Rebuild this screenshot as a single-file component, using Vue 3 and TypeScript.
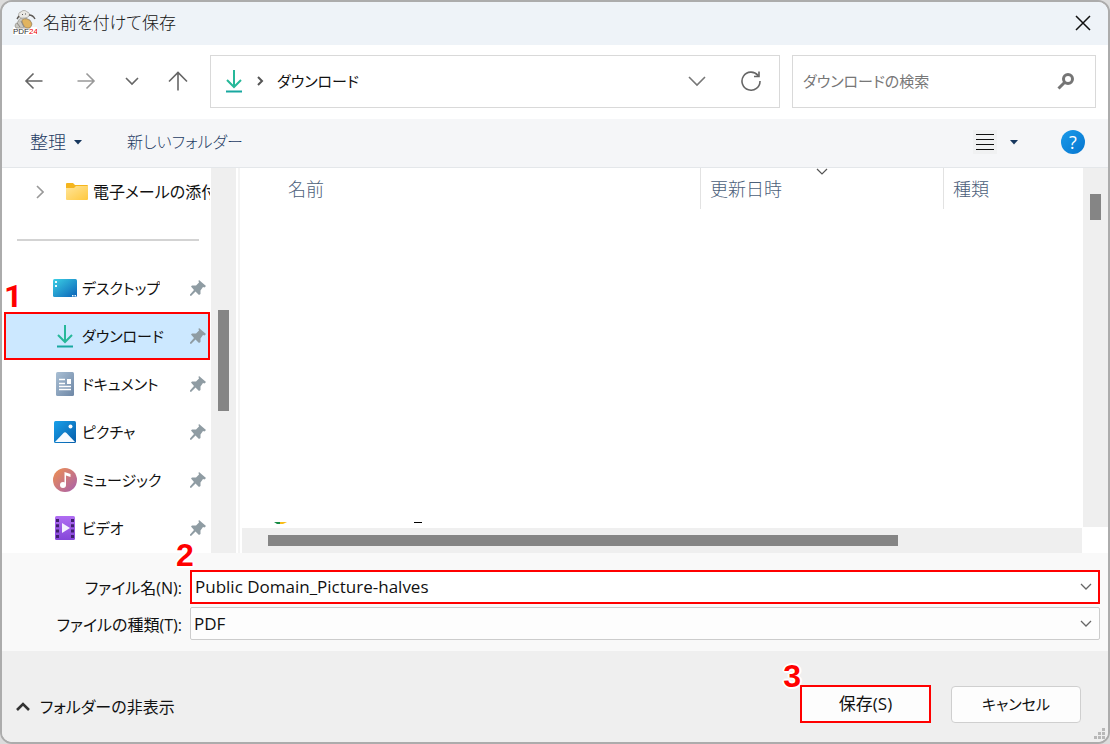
<script setup lang="ts">
import { ref } from 'vue'

interface Place {
  name: string
  icon: 'desktop' | 'download' | 'document' | 'picture' | 'music' | 'video'
}

const places: Place[] = [
  { name: 'デスクトップ', icon: 'desktop' },
  { name: 'ダウンロード', icon: 'download' },
  { name: 'ドキュメント', icon: 'document' },
  { name: 'ピクチャ', icon: 'picture' },
  { name: 'ミュージック', icon: 'music' },
  { name: 'ビデオ', icon: 'video' },
]

const current = ref('ダウンロード')
const fileName = ref('Public Domain_Picture-halves')
const fileType = ref('PDF')
const query = ref('')
</script>

<template>
  <main class="dialog">
    <header class="titlebar">
      <svg class="logo" width="24" height="25" viewBox="0 0 24 25">
        <rect x="0" y="17" width="24" height="8" fill="#fff" />
        <path d="M3 18C1 15 3 13 5 12C6 8 9 7 12 8L17 10L19 14L17 18Z" fill="#c9c8c2" stroke="#8c8982" stroke-width=".7" />
        <path d="M6 7C5 4 6 2 8 2C9 0 13 0 14 2C16 2 17 4 16 6C15 8 8 9 6 7Z" fill="#e9e8e4" stroke="#9b9994" stroke-width=".7" />
        <path d="M6 6L4 9M16 5Q20 5 22 9" fill="none" stroke="#5f5b57" stroke-width="1.4" />
        <path d="M9 10Q14 7 18 12Q20 17 15 18Q10 18 9 10Z" fill="#e1b45f" stroke="#a98a55" stroke-width=".7" />
        <path d="M8 11L11 17M4 13L7 17" stroke="#8b8782" stroke-width="1" />
        <path d="M9 4L10 5M12 4L13 4" stroke="#555" stroke-width="1" />
        <text x="0" y="24" class="logo-text" fill="#333">PDF<tspan fill="#e00">24</tspan></text>
      </svg>
      <h1>名前を付けて保存</h1>
      <button class="plain close" type="button" aria-label="閉じる">
        <svg width="16" height="16" viewBox="0 0 16 16"><path d="M1 1L15 15M15 1L1 15" stroke="#111" stroke-width="1.5" /></svg>
      </button>
    </header>

    <nav class="navbar">
      <div class="history">
        <button class="plain" type="button" aria-label="戻る">
          <svg width="20" height="20" viewBox="0 0 20 20" class="line dark"><path d="M18.500 10H2M9.500 2.500L2 10L9.500 17.500" /></svg>
        </button>
        <button class="plain" type="button" aria-label="進む">
          <svg width="20" height="20" viewBox="0 0 20 20" class="line pale"><path d="M1.500 10H18M10.500 2.500L18 10L10.500 17.500" /></svg>
        </button>
        <button class="plain" type="button" aria-label="履歴">
          <svg width="14" height="14" viewBox="0 0 14 14" class="line dark"><path d="M1 4L7 10L13 4" /></svg>
        </button>
        <button class="plain" type="button" aria-label="上へ">
          <svg width="20" height="20" viewBox="0 0 20 20" class="line dark"><path d="M10 19.500V1.500M1 10.500L10 1.500L19 10.500" /></svg>
        </button>
      </div>
      <div class="address">
        <svg width="18" height="24" viewBox="0 0 18 24" class="down"><path d="M9 1V18M2 11L9 18L16 11" /><path d="M1 22.500H17" class="tray" /></svg>
        <svg width="8" height="10" viewBox="0 0 8 10" class="line strong"><path d="M2 1L6 5L2 9" /></svg>
        <span class="crumb">ダウンロード</span>
        <button class="plain" type="button" aria-label="以前の場所">
          <svg width="18" height="12" viewBox="0 0 18 12" class="line mid"><path d="M1 2L9 10L17 2" /></svg>
        </button>
        <button class="plain" type="button" aria-label="更新">
          <svg width="20" height="20" viewBox="0 0 20 20" class="line dark"><path d="M17 4.500A9 9 0 1 0 19 10M18 0.500V5.500H13" /></svg>
        </button>
      </div>
      <label class="search">
        <input v-model="query" type="text" placeholder="ダウンロードの検索" aria-label="ダウンロードの検索">
        <svg width="18" height="18" viewBox="0 0 18 18"><circle cx="11" cy="7" r="4.500" fill="none" stroke="#757575" stroke-width="3" /><path d="M7.500 10.500L1.500 16.500" stroke="#757575" stroke-width="3" /></svg>
      </label>
    </nav>

    <section class="toolbar">
      <button class="plain tool" type="button">整理<svg width="8" height="5" viewBox="0 0 8 5"><path d="M0 0H8L4 4.500Z" fill="#17375e" /></svg></button>
      <button class="plain tool" type="button">新しいフォルダー</button>
      <span class="grow" />
      <button class="plain view" type="button" aria-label="表示方法">
        <svg class="lines" width="24" height="24" viewBox="0 0 24 24"><path d="M3 4.500H21M3 9.500H21M3 14.500H21M3 19.500H21" stroke="#111" stroke-width="1" /></svg>
        <svg width="8" height="5" viewBox="0 0 8 5"><path d="M0 0H8L4 4.500Z" fill="#17375e" /></svg>
      </button>
      <button class="help" type="button" aria-label="ヘルプ">?</button>
    </section>

    <section class="browser">
      <aside class="sidebar">
        <button class="plain place folder" type="button">
          <svg width="8" height="14" viewBox="0 0 8 14" class="line pale"><path d="M1 1L7 7L1 13" /></svg>
          <svg width="24" height="20" viewBox="0 0 24 20">
            <defs><linearGradient id="folder" x1="0" y1="0" x2="1" y2="1"><stop stop-color="#ffe59a" /><stop offset="1" stop-color="#ffc83d" /></linearGradient></defs>
            <path d="M1 4V2Q1 1 2 1H8L10 3H22Q23 3 23 4V7H1Z" fill="#f5b51d" />
            <path d="M1 6H9L11 4H23V17Q23 18 22 18H2Q1 18 1 17Z" fill="url(#folder)" />
          </svg>
          <span>電子メールの添付</span>
        </button>
        <hr>
        <button
          v-for="place in places"
          :key="place.name"
          type="button"
          :class="['plain', 'place', { selected: place.name === current }]"
          @click="current = place.name"
        >
          <svg v-if="place.icon === 'desktop'" width="24" height="24" viewBox="0 0 24 24">
            <defs><linearGradient id="desk" x1="0" y1="0" x2="1" y2="1"><stop stop-color="#3bd0e5" /><stop offset="1" stop-color="#0b62b8" /></linearGradient></defs>
            <rect y="3" width="24" height="18" rx="1.500" fill="url(#desk)" />
            <path d="M2 5H4V7H2ZM2 9H4V11H2ZM19 19H20.500V20.500H19ZM21.500 19H23V20.500H21.500Z" fill="#e9fbff" />
          </svg>
          <svg v-else-if="place.icon === 'download'" width="24" height="24" viewBox="0 0 24 24" class="down"><path d="M12 1V18M5 11L12 18L19 11" /><path d="M4 22.500H20" class="tray" /></svg>
          <svg v-else-if="place.icon === 'document'" width="24" height="24" viewBox="0 0 24 24">
            <defs><linearGradient id="doc" x1="0" y1="0" x2="1" y2="1"><stop stop-color="#a9bfd4" /><stop offset="1" stop-color="#6e87a6" /></linearGradient></defs>
            <rect x="3" width="18" height="24" rx="1.500" fill="url(#doc)" />
            <path d="M6 7.500H12M6 11.500H12M6 14.500H18M6 17.500H18" stroke="#fff" stroke-width="1.300" />
            <rect x="14" y="7" width="4" height="5" fill="#fff" />
          </svg>
          <svg v-else-if="place.icon === 'picture'" width="24" height="24" viewBox="0 0 24 24">
            <defs><linearGradient id="pic" x1="0" y1="0" x2="1" y2="1"><stop stop-color="#18a0ea" /><stop offset="1" stop-color="#075da9" /></linearGradient></defs>
            <rect x="1" y="1" width="22" height="22" rx="1.500" fill="url(#pic)" />
            <path d="M2 22L10.500 13Q12 11.500 13.500 13L22 22Z" fill="#f7fbff" /><circle cx="17.500" cy="6.500" r="2" fill="#fff" />
          </svg>
          <svg v-else-if="place.icon === 'music'" width="24" height="24" viewBox="0 0 24 24">
            <defs><linearGradient id="music" x1="0" y1="0" x2="1" y2="1"><stop stop-color="#f0914f" /><stop offset="1" stop-color="#a75fae" /></linearGradient></defs>
            <circle cx="12" cy="12" r="12" fill="url(#music)" />
            <circle cx="10" cy="17" r="3" fill="#fff" /><path d="M11.500 17V4L17.500 6V9L13 7.500V17Z" fill="#fff" />
          </svg>
          <svg v-else width="24" height="24" viewBox="0 0 24 24">
            <defs><linearGradient id="video" x1="0" y1="0" x2="0" y2="1"><stop stop-color="#b06df2" /><stop offset="1" stop-color="#8546d9" /></linearGradient></defs>
            <rect x="2" width="20" height="24" rx="1.500" fill="url(#video)" />
            <path d="M4.500 3V22M19.500 3V22" stroke="#40206f" stroke-width="3" stroke-dasharray="3 2.300" />
            <path d="M9 7L17 12L9 17Z" fill="#f4efff" />
          </svg>
          <span>{{ place.name }}</span>
          <svg class="pin" width="16" height="16" viewBox="0 0 16 16"><path d="M9 0L16 6L14.500 7.500L13 7L10.500 10.500V14L9 15L5.500 11.500L1 16L0 15.500V14.500L4 10L1 6.500L2 5.500H6L9 2.500L8.500 1Z" fill="#8f9ca3" /></svg>
        </button>
      </aside>
      <div class="track vertical"><div class="thumb places-thumb" /></div>
      <div class="splitter" />
      <div class="files">
        <table>
          <thead>
            <tr>
              <th class="col-name" scope="col">名前</th>
              <th class="col-date" scope="col">更新日時
                <svg class="sort" width="12" height="8" viewBox="0 0 12 8"><path d="M1 1L6 6L11 1" fill="none" stroke="#555" stroke-width="1.200" /></svg>
              </th>
              <th scope="col">種類</th>
            </tr>
          </thead>
        </table>
        <svg class="row-edge" width="150" height="2" viewBox="0 0 150 2"><path d="M1 0H7V2H4Z" fill="#168b43" /><path d="M7 0H14L10 2H7Z" fill="#f8bd18" /><path d="M141 0H149V1H141Z" fill="#000" /></svg>
        <div class="track horizontal"><div class="thumb wide-thumb" /></div>
      </div>
      <div class="track vertical list-track"><div class="thumb files-thumb" /></div>
    </section>

    <section class="fields">
      <label for="file-name">ファイル名(N):</label>
      <div class="combo marked">
        <input id="file-name" v-model="fileName" type="text">
        <svg width="12" height="8" viewBox="0 0 12 8" class="line chevron"><path d="M1 1L6 6L11 1" /></svg>
      </div>
      <label for="file-type">ファイルの種類(T):</label>
      <div class="combo boxed">
        <select id="file-type" v-model="fileType"><option>PDF</option></select>
        <svg width="12" height="8" viewBox="0 0 12 8" class="line chevron"><path d="M1 1L6 6L11 1" /></svg>
      </div>
    </section>

    <footer class="footer">
      <button class="plain toggle" type="button">
        <svg width="14" height="10" viewBox="0 0 14 10"><path d="M1 8L7 2L13 8" fill="none" stroke="#333" stroke-width="2.600" /></svg>
        フォルダーの非表示
      </button>
      <button class="action save" type="button">保存(S)</button>
      <button class="action" type="button">キャンセル</button>
      <svg class="grip" width="12" height="12" viewBox="0 0 12 12"><path d="M8 0H11V3H8ZM4 4H7V7H4ZM8 4H11V7H8ZM0 8H3V11H0ZM4 8H7V11H4ZM8 8H11V11H8Z" fill="#b8b8b8" /></svg>
    </footer>

    <span class="step one">1</span>
    <span class="step two">2</span>
    <span class="step three">3</span>
  </main>
</template>

<style>
html, body {
  margin: 0;
  background: #dcdcdc;
}
</style>

<style scoped>
* {
  box-sizing: border-box;
}
.dialog {
  position: relative;
  display: flex;
  flex-direction: column;
  min-height: 100vh;
  overflow: hidden;
  border: 2px solid #acacac;
  border-radius: 12px;
  background: #fff;
  color: #111;
  font: 400 16px/24px "Open Sans", "Noto Sans CJK JP", sans-serif;
  font-feature-settings: "palt";
}
svg {
  display: block;
  flex: none;
}
button, input, select {
  font: inherit;
  font-feature-settings: inherit;
  color: inherit;
}
.plain {
  display: flex;
  align-items: center;
  justify-content: center;
  padding: 0;
  border: 0;
  background: none;
  white-space: nowrap;
}
.line {
  fill: none;
  stroke-width: 1.6;
}
.dark { stroke: #666; }
.pale { stroke: #999; }
.mid { stroke: #777; }
.strong { stroke: #555; stroke-width: 2; }
.down {
  fill: none;
  stroke: #26b899;
  stroke-width: 2;
}
.tray { stroke: #18a8a0; }

.titlebar {
  display: flex;
  align-items: center;
  height: 43px;
  padding: 0 17px 2px 11px;
  background: #eef3f8;
}
.logo-text {
  font: 400 8px "Liberation Sans", sans-serif;
}
h1 {
  margin: 0 auto 0 6px;
  font-size: 17px;
  font-weight: 300;
}

.navbar {
  display: flex;
  align-items: center;
  gap: 12px;
  height: 74px;
  padding: 0 12px 2px 16px;
}
.history {
  display: flex;
  gap: 16px;
  width: 180px;
}
.history button {
  width: 32px;
  height: 32px;
}
.history button:nth-child(2) {
  margin-left: 4px;
}
.history button:nth-child(n + 3) {
  margin-left: -2px;
}
.address, .search {
  display: flex;
  align-items: center;
  height: 53px;
  border: 1px solid #d9d9d9;
  background: #fff;
}
.address {
  flex: 1;
  gap: 13px;
  padding: 0 18px 0 14px;
}
.crumb {
  flex: 1;
  font-size: 15px;
}
.address button + button {
  margin-left: 22px;
}
.search {
  width: 304px;
  padding: 0 20px 0 10px;
}
.search input {
  flex: 1;
  min-width: 0;
  padding: 0;
  border: 0;
  outline: 0;
  background: none;
  font-size: 15px;
}
.search input::placeholder {
  color: #777;
  opacity: 1;
}

.toolbar {
  display: flex;
  align-items: center;
  height: 49px;
  padding: 0 23px 2px 28px;
  border-bottom: 1px solid #e4e7ea;
  background: #f5f6f8;
  color: #1f3c64;
}
.tool {
  gap: 8px;
  margin-right: 45px;
  font-size: 18px;
  font-weight: 300;
}
.tool + .tool {
  font-size: 16px;
}
.grow {
  flex: 1;
}
.view {
  gap: 13px;
  margin-right: 43px;
}
.lines {
  background: #f0f1f2;
}
.help {
  width: 24px;
  height: 24px;
  padding: 0;
  border: 0;
  border-radius: 50%;
  background: linear-gradient(135deg, #1b9bea, #0675cf);
  color: #fff;
  font-size: 18px;
}

.browser {
  display: flex;
  flex: 1;
  min-height: 385px;
}
.sidebar {
  width: 209px;
  overflow: hidden;
}
.place {
  justify-content: flex-start;
  gap: 5px;
  width: 208px;
  height: 48px;
  padding: 0 4px 0 51px;
  font-size: 15px;
}
.place span {
  overflow: hidden;
}
.folder {
  gap: 21px;
  padding: 0 0 0 34px;
  font-size: 16px;
}
.folder span {
  margin-left: -17px;
}
.sidebar hr {
  height: 2px;
  margin: 23px 12px 23px 15px;
  border: 0;
  background: #d3d3d3;
}
.pin {
  margin-left: auto;
}
.selected {
  background: #cce8ff;
  outline: 2px solid #f00;
  outline-offset: -2px;
  margin-left: 2px;
  width: 206px;
  padding-left: 49px;
}
.track {
  background: #efefef;
}
.vertical {
  flex: none;
  width: 25px;
  padding: 0 7px;
}
.thumb {
  background: #858585;
}
.places-thumb {
  height: 101px;
  margin-top: 142px;
}
.files-thumb {
  height: 26px;
  margin-top: 26px;
}
.list-track {
  margin-bottom: 26px;
}
.splitter {
  flex: none;
  width: 4px;
  border-right: 2px solid #f4f4f4;
}
.files {
  display: flex;
  flex: 1;
  flex-direction: column;
  min-width: 0;
}
table {
  width: 100%;
  table-layout: fixed;
  border-collapse: separate;
  border-spacing: 0;
}
th {
  position: relative;
  height: 41px;
  padding: 0 0 0 9px;
  color: #4c607a;
  font-size: 18px;
  font-weight: 300;
  text-align: left;
}
th + th {
  border-left: 1px solid #e2e2e2;
}
.col-name {
  width: 460px;
  padding-left: 48px;
}
.col-date {
  width: 243px;
}
.sort {
  position: absolute;
  top: 0;
  left: 50%;
  transform: translateX(-50%);
}
.row-edge {
  margin: auto 0 4px 33px;
}
.horizontal {
  height: 25px;
  margin: 0 1px 0 2px;
  padding: 7px 27px 7px 26px;
}
.wide-thumb {
  width: 80%;
  height: 11px;
}

.fields {
  display: grid;
  grid-template-columns: 180px 1fr;
  gap: 3px 8px;
  align-items: center;
  padding: 17px 8px 11px 0;
  background: #f9f9f9;
}
.fields label {
  padding-top: 2px;
  text-align: right;
}
.combo {
  display: flex;
  align-items: center;
  height: 34px;
  padding: 0 6px 0 3px;
  background: #fff;
}
.marked {
  border: 2px solid #f00;
}
.boxed {
  height: 33px;
  padding: 0 7px 0 3px;
  border: 1px solid #ccc;
  border-radius: 2px;
  background: #fdfdfd;
}
.combo input, .combo select {
  flex: 1;
  min-width: 0;
  padding: 0;
  border: 0;
  outline: 0;
  background: none;
  appearance: none;
  font-size: 17px;
}
.chevron {
  stroke: #666;
  stroke-width: 1.3;
}

.footer {
  position: relative;
  display: flex;
  align-items: center;
  gap: 20px;
  height: 91px;
  padding: 15px 27px 0 14px;
  background: #efefef;
}
.toggle {
  gap: 10px;
  margin-right: auto;
  padding-top: 6px;
}
.action {
  width: 130px;
  height: 37px;
  padding: 0;
  border: 1px solid #cfcfcf;
  border-radius: 4px;
  background: #fdfdfd;
  font-size: 15px;
}
.save {
  width: 131px;
  height: 38px;
  border: 2px solid #f00;
  border-radius: 0;
  font-size: 17px;
}
.grip {
  position: absolute;
  right: 2px;
  bottom: 2px;
}

.step {
  position: absolute;
  color: #f00;
  font: 700 32px/32px "Liberation Sans", sans-serif;
  text-shadow: 2px 0 #fff, -2px 0 #fff, 0 2px #fff, 0 -2px #fff, 1px 1px #fff, -1px -1px #fff, 1px -1px #fff, -1px 1px #fff;
}
.one {
  top: 278px;
  left: 2px;
  font-family: Roboto, sans-serif;
}
.two {
  bottom: 171px;
  left: 174px;
}
.three {
  right: 307px;
  bottom: 50px;
}
</style>
